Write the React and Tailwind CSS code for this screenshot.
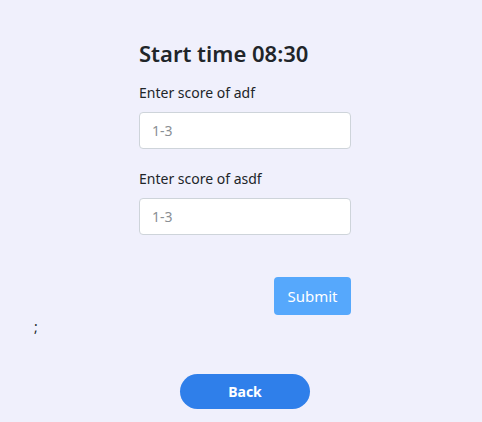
export default function App() {
  const fields = ["adf", "asdf"];

  return (
    <div className="min-h-[422px] bg-[#f0f0fc] font-['Noto_Sans',sans-serif] text-[#212529]">
      <div className="flex justify-center pl-2 pt-[38px]">
        <form className="w-[212px]" onSubmit={(e) => e.preventDefault()}>
          <h1 className="text-[22px] leading-[30px] font-semibold">Start time 08:30</h1>
          <div className="mt-[15px] flex flex-col gap-[20px]">
            {fields.map((f) => (
              <div key={f}>
                <label className="block text-[14px] leading-[20px] text-[#212529]">Enter score of {f}</label>
                <input
                  placeholder="1-3"
                  className="mt-[9px] block h-[37px] w-full rounded-[4px] border border-[#ced4da] bg-white px-[12px] text-[14px] placeholder:text-[#8a8f94] outline-none"
                />
              </div>
            ))}
          </div>
          <div className="mt-[42px] flex justify-end">
            <button className="h-[38px] w-[77px] rounded-[4px] bg-[#56a8fc] text-[15px] text-white">Submit</button>
          </div>
        </form>
      </div>
      <p className="pl-[34px] pt-[2px] text-[14px] leading-[20px]">;</p>
      <div className="flex justify-center pl-2 pt-[37px]">
        <button className="h-[35px] w-[130px] rounded-full bg-[#2f7fea] text-[14px] font-bold text-white">Back</button>
      </div>
    </div>
  );
}
